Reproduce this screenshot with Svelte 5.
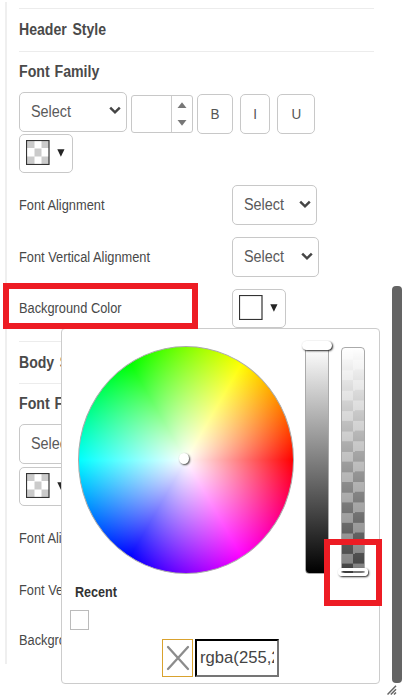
<script>
  const sections = [
    { title: 'Header Style' },
    { title: 'Body Style' }
  ];
  const buttons = [
    { label: 'B', width: 36 },
    { label: 'I', width: 30 },
    { label: 'U', width: 38 }
  ];
</script>

{#snippet select(width)}
  <div class="box select" style="width:{width}px">
    <span class="t">Select</span>
    <svg width="12" height="9" viewBox="0 0 12 9"><path d="M1.2 1.7 6 6.3l4.8-4.6" fill="none" stroke="#454545" stroke-width="2.5" /></svg>
  </div>
{/snippet}

{#snippet swatch(checked)}
  <div class="box swatch">
    <svg class="chip" width="24" height="25" viewBox="0 0 24 25">
      <rect width="24" height="25" fill="#fff" />
      {#if checked}
        <path d="M1 1h7.5v7H1zM15.500 1H23v7h-7.500zM8.500 8.500h7v8h-7zM1 16.500h7.500V24H1zM15.500 16.500H23V24h-7.500z" fill="#cbcbcb" />
      {/if}
      <rect x=".5" y=".5" width="22.500" height="24" fill="none" stroke="#333" stroke-width="1.200" />
    </svg>
    <svg width="8" height="8" viewBox="0 0 8 8"><path d="M.3.3h7.200L3.900 7.800z" fill="#252525" /></svg>
  </div>
{/snippet}

<div class="page">
  <div class="panel">
    {#each sections as s}
      <section>
        <h2><span class="t">{s.title}</span></h2>
        <h3><span class="t">Font Family</span></h3>
        <div class="tools">
          {@render select(108)}
          <div class="box number">
            <div class="spin">
              <svg width="10" height="6" viewBox="0 0 10 6"><path d="M.5 6 5 .3 9.500 6z" fill="#777" /></svg>
              <svg width="10" height="6" viewBox="0 0 10 6"><path d="M.5 0 5 5.700 9.500 0z" fill="#777" /></svg>
            </div>
          </div>
          {#each buttons as b}
            <div class="box btn" style="width:{b.width}px"><span class="t">{b.label}</span></div>
          {/each}
        </div>
        {@render swatch(true)}
        <div class="row first"><label><span class="t">Font Alignment</span></label>{@render select(85)}</div>
        <div class="row"><label><span class="t">Font Vertical Alignment</span></label>{@render select(87)}</div>
        <div class="row last"><label><span class="t">Background Color</span></label>{@render swatch(false)}</div>
      </section>
    {/each}
  </div>

  <div class="popup">
    <div class="pickers">
      <div class="wheel"><i class="dot"></i></div>
      <div class="bar value"><i class="handle"></i></div>
      <div class="bar alpha"><i class="handle"></i></div>
    </div>
    <div class="recent"><span class="t">Recent</span></div>
    <div class="recent-chip"></div>
    <div class="entry">
      <div class="clear">
        <svg width="24" height="26" viewBox="0 0 24 26"><path d="M2 2 22 24M22 2 2 24" stroke="#8c8c8c" stroke-width="2.300" stroke-linecap="round" /></svg>
      </div>
      <div class="field"><div class="clip"><span class="t">rgba(255,255,255,0)</span></div></div>
    </div>
  </div>

  <div class="scroll"></div>
  <svg class="grip" width="10" height="10" viewBox="0 0 10 10"><path d="M.5 9.500 9 .8M3.800 9.500 9 4.200M7 9.500l2-2" stroke="#666" stroke-width="1.500" /></svg>
  <div class="mark label-mark"></div>
  <div class="mark handle-mark"></div>
</div>

<style>
  :global(body) { background: #fff; }
  .page {
    position: relative;
    width: 402px;
    height: 698px;
    overflow: hidden;
    background: #fff;
    font-family: "Liberation Sans", Arial, sans-serif;
    color: #484848;
  }
  .page :global(*) { box-sizing: border-box; }
  svg { display: block; flex: none; }
  .t { display: inline-block; white-space: pre; transform: scaleX(.9); transform-origin: 0 50%; }
  .panel {
    position: absolute;
    left: 5px;
    top: 2px;
    width: 370px;
    height: 662px;
    overflow: hidden;
    border-left: 2px solid #efefef;
    padding: 6px 1px 0 12px;
  }
  section { height: 332.5px; border-top: 1.500px solid #ececec; }
  h2, h3 { margin: 0; font-size: 16px; font-weight: bold; color: #4a4a4a; }
  h2 { height: 42.5px; line-height: 41px; border-bottom: 1.500px solid #ececec; }
  h2 .t { word-spacing: 2px; transform: scaleX(.88); }
  h3 { height: 40px; line-height: 40px; }
  h3 .t { word-spacing: 1px; transform: scaleX(.885); }
  .tools { display: flex; align-items: flex-start; height: 42.5px; }
  .box { flex: none; border: 1.500px solid #c8c8c8; border-radius: 5px; background: #fff; }
  .select {
    height: 40px;
    display: flex;
    align-items: center;
    justify-content: space-between;
    padding: 0 5px 0 11px;
    font-size: 16px;
    color: #5a5a5a;
  }
  .select .t { width: 44px; }
  .select svg { margin-top: -2px; }
  .number { width: 62px; height: 38px; margin: 3px 4px 0; border-radius: 3px; display: flex; justify-content: flex-end; }
  .spin {
    width: 21px;
    border-left: 1px solid #ccc;
    display: flex;
    flex-direction: column;
    align-items: center;
    justify-content: center;
    gap: 12px;
  }
  .btn {
    height: 40px;
    margin: 2.5px 7px 0 0;
    padding-bottom: 2px;
    display: flex;
    align-items: center;
    justify-content: center;
    font-size: 15px;
    color: #555;
  }
  .btn .t { transform-origin: 50% 50%; }
  .swatch { width: 54px; height: 39px; display: flex; align-items: center; padding: 0 0 1px 6px; gap: 7px; }
  .swatch .chip { margin-top: -1px; }
  .row { display: flex; align-items: center; height: 40px; margin-bottom: 12px; }
  .row.first { margin-top: 12px; }
  .row.last { height: 39px; }
  label { width: 213px; font-size: 14px; line-height: 20px; }
  .last label { padding-bottom: 2px; }
  label .t { transform: scaleX(.915); }

  .popup {
    position: absolute;
    left: 61px;
    top: 328px;
    width: 319px;
    height: 355.5px;
    border: 1.500px solid #ccc;
    border-radius: 4px;
    background: #fff;
  }
  .pickers { display: flex; padding: 17px 0 0 16px; }
  .wheel {
    width: 216px;
    height: 228px;
    border-radius: 50%;
    border: 1px solid #aaa;
    display: flex;
    align-items: center;
    justify-content: center;
    background:
      radial-gradient(ellipse closest-side, #fff, rgba(255, 255, 255, 0)),
      conic-gradient(from 90deg, #f00, #f0f, #00f, #0ff, #0f0, #ff0, #f00);
  }
  .dot { width: 10px; height: 11px; margin: -3px 5px 0 0; border-radius: 50%; background: #fff; box-shadow: 1px 1px 2px #444; }
  .bar { height: 228px; width: 24px; border: 1px solid #aaa; border-radius: 4px; position: relative; }
  .value { margin-left: 11px; background: linear-gradient(#fff, #000); }
  .alpha {
    margin-left: 12px;
    margin-top: 1px;
    height: 227px;
    background:
      linear-gradient(#fff, rgba(255, 255, 255, 0)),
      conic-gradient(#808080 25%, #404040 0 50%, #808080 0 75%, #404040 0) 0 11.700px / 22px 20.400px;
  }
  .handle {
    position: absolute;
    left: -4px;
    width: 30px;
    height: 9px;
    border: 3px solid #fff;
    border-radius: 5px;
    box-shadow: 1px 1px 2px #222;
  }
  .value .handle { top: -6px; background: #fff; }
  .alpha .handle { bottom: -3px; height: 8px; box-shadow: 1px 1px 2px #222, inset 0 0 1px #222; }
  .recent { margin: 9px 0 0 12.5px; height: 18px; line-height: 18px; font-size: 14px; font-weight: bold; color: #333; }
  .recent .t { width: 46px; }
  .recent-chip { width: 19px; height: 20px; margin: 9px 0 0 8px; border: 1px solid #bbb; }
  .entry { display: flex; align-items: flex-start; margin: 9px 0 0 100px; gap: 2px; }
  .clear { width: 31px; height: 38px; border: 1.500px solid #d9a22e; display: flex; align-items: center; justify-content: center; }
  .field { width: 84px; height: 38px; border: 2px solid #757575; border-top-color: #000; border-left-color: #000; padding: 0 3px; }
  .clip { overflow: hidden; height: 34px; line-height: 34px; font-size: 17px; color: #444; }
  .clip .t { transform: scaleX(.98); }
  .scroll { position: absolute; left: 392px; top: 286px; width: 10px; height: 397px; border-radius: 4px; background: #646464; }
  .grip { position: absolute; left: 387px; top: 685px; }
  .mark { position: absolute; border: 6px solid #ed1c24; }
  .label-mark { left: 3px; top: 283px; width: 195px; height: 46px; }
  .handle-mark { left: 324px; top: 539px; width: 58px; height: 67px; }
</style>
